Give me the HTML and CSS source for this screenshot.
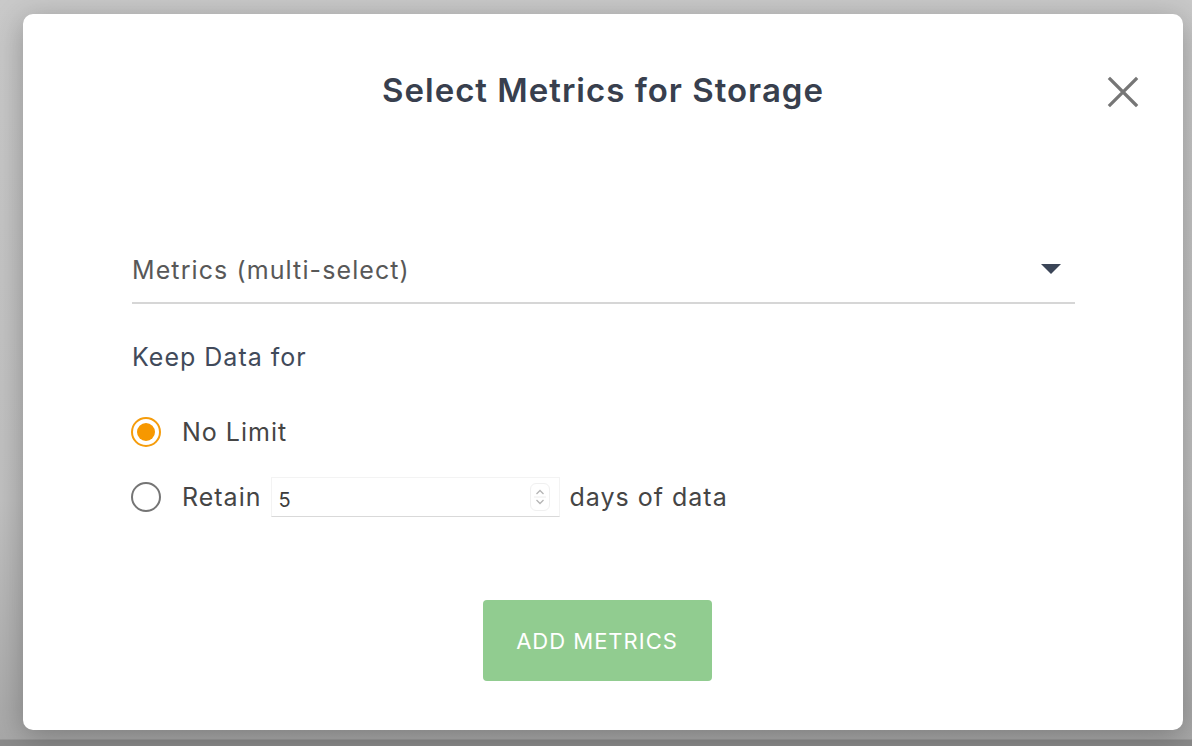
FILE: index.html
```html
<!DOCTYPE html>
<html lang="en">
<head>
<meta charset="utf-8">
<title>Select Metrics for Storage</title>
<link rel="stylesheet" href="styles.css">
</head>
<body>
<div class="modal">
  <button class="close" aria-label="Close">
    <svg width="32" height="32" viewBox="0 0 32 32"><path d="M3 3 L29 29 M29 3 L3 29" stroke="#767676" stroke-width="3.2" stroke-linecap="square" fill="none"/></svg>
  </button>
  <div class="header">
    <h1 class="title">Select Metrics for Storage</h1>
  </div>
  <div class="content">
    <div class="select">
      <span class="select-label">Metrics (multi-select)</span>
      <svg class="caret" width="20" height="10" viewBox="0 0 20 10"><path d="M0 0 H20 L10 10 Z" fill="#3b4557"/></svg>
    </div>
    <div class="section-label">Keep Data for</div>
    <div class="radios">
      <label class="radio-row">
        <span class="radio checked"><span class="dot"></span></span>
        <span class="radio-text">No Limit</span>
      </label>
      <label class="radio-row">
        <span class="radio"></span>
        <span class="radio-text">Retain</span>
        <span class="num-input">
          <span class="num-value">5</span>
          <span class="spinner">
            <svg width="14" height="22" viewBox="0 0 14 22"><path d="M3.5 8 L7 4.5 L10.5 8 M3.5 14 L7 17.5 L10.5 14" stroke="#b5b5b5" stroke-width="1.3" fill="none"/><path d="M1 11 H13" stroke="#ececec" stroke-width="1"/></svg>
          </span>
        </span>
        <span class="radio-text after">days of data</span>
      </label>
    </div>
    <div class="actions">
      <button class="add-btn">ADD METRICS</button>
    </div>
  </div>
</div>
</body>
</html>
```
FILE: styles.css
```css
html, body {
  margin: 0;
  padding: 0;
}
body {
  width: 1192px;
  height: 746px;
  overflow: hidden;
  font-family: Inter, "Noto Sans", "Liberation Sans", sans-serif;
  background: linear-gradient(to bottom, #c9c9c9 0, #c0c0c0 500px, #a8a8a8 739px, #8a8a8a 740px, #8a8a8a 746px);
  padding-top: 14px;
  box-sizing: border-box;
}
.modal {
  position: relative;
  margin-left: 23px;
  width: 1160px;
  height: 716px;
  background: #fff;
  border-radius: 10px;
  box-shadow: 0 6px 30px rgba(0, 0, 0, 0.28);
  box-sizing: border-box;
}
.close {
  position: absolute;
  top: 62px;
  left: 1084px;
  width: 32px;
  height: 32px;
  padding: 0;
  border: 0;
  background: none;
  display: flex;
}
.header {
  padding-top: 57px;
  display: flex;
  justify-content: center;
}
.title {
  margin: 0;
  font-size: 33px;
  line-height: 38px;
  font-weight: 600;
  color: #383f4e;
  letter-spacing: 1px;
}
.content {
  padding: 145px 108px 0 108px;
  display: flex;
  flex-direction: column;
}
.select {
  display: flex;
  align-items: center;
  justify-content: space-between;
  padding-bottom: 16px;
  border-bottom: 2px solid #d6d6d6;
  margin-left: 1px;
}
.select-label {
  font-size: 25px;
  line-height: 32px;
  color: #585858;
  letter-spacing: 1.1px;
}
.caret {
  margin-right: 14px;
  margin-top: -2px;
}
.section-label {
  margin-top: 37px;
  margin-left: 1px;
  font-size: 25px;
  line-height: 32px;
  color: #414a5a;
  letter-spacing: 1px;
}
.radios {
  margin-top: 39px;
  display: flex;
  flex-direction: column;
  gap: 25px;
}
.radio-row {
  display: flex;
  align-items: center;
  height: 40px;
}
.radio {
  width: 30px;
  height: 30px;
  box-sizing: border-box;
  border: 2px solid #757575;
  border-radius: 50%;
  display: flex;
  align-items: center;
  justify-content: center;
}
.radio.checked {
  border: 2.5px solid #f59c0b;
}
.dot {
  width: 18px;
  height: 18px;
  border-radius: 50%;
  background: #f79800;
}
.radio-text {
  margin-left: 21px;
  font-size: 25px;
  line-height: 32px;
  color: #454545;
  letter-spacing: 1px;
}
.radio-text.after {
  margin-left: 9px;
}
.num-input {
  margin-left: 10px;
  width: 289px;
  height: 40px;
  box-sizing: border-box;
  border: 1px solid #f3f3f3;
  border-bottom: 1px solid #d9d9d9;
  display: flex;
  align-items: center;
  justify-content: space-between;
  padding: 0 9px 0 6px;
}
.num-value {
  font-size: 20px;
  color: #3c3c3c;
  padding-top: 5px;
}
.spinner {
  width: 20px;
  height: 28px;
  box-sizing: border-box;
  border: 1px solid #f0f0f0;
  border-radius: 6px;
  display: flex;
  align-items: center;
  justify-content: center;
}
.actions {
  margin-top: 83px;
  display: flex;
  justify-content: center;
  padding-right: 12px;
}
.add-btn {
  width: 229px;
  height: 81px;
  border: 0;
  border-radius: 4px;
  background: #91cc90;
  color: #fff;
  font-family: Inter, "Noto Sans", "Liberation Sans", sans-serif;
  font-size: 22px;
  font-weight: 400;
  letter-spacing: 1px;
  padding: 0;
}
```
